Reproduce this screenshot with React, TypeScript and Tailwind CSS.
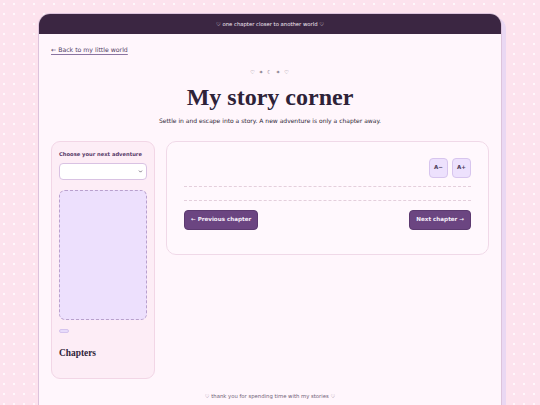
import { ChevronDown } from 'lucide-react';

const sans = "font-['DejaVu_Sans',sans-serif]";
const serif = "font-['Liberation_Serif',serif]";

export default function App() {
  return (
    <div className={`min-h-screen bg-[#fde3ee] bg-[radial-gradient(circle,rgba(255,255,255,0.75)_0.9px,transparent_1.2px)] bg-[size:10px_10px] bg-[position:-1px_-1px] px-[38px] pt-[13px] text-[6px] leading-[8px] ${sans}`}>
      <div className="bg-[#fff6fc] border border-[#dcc3dc] rounded-t-[12px] shadow-[4px_4px_0_#ead8f3] overflow-hidden">
        <div className="h-[20px] bg-[#3b2642] flex items-center justify-center text-[5.3px] text-[#f4eaf6]">
          ♡ one chapter closer to another world ♡
        </div>

        <div className="px-[12px] pt-[12px] pb-[14px]">
          <div className="h-[8px]">
            <a href="#" className="text-[6.2px] text-[#4f3d64] underline decoration-[#8a74a0] underline-offset-2">
              ← Back to my little world
            </a>
          </div>

          <div className="mt-[14px] text-center text-[5.5px] text-[#7c7282] tracking-[1px]">♡ ✦ ☾ ✦ ♡</div>
          <h1 className={`${serif} mt-[8px] text-center text-[24px] leading-[26px] font-bold text-[#2e2238]`}>My story corner</h1>
          <p className="mt-[7px] text-center text-[6px] text-[#2f2836]">
            Settle in and escape into a story. A new adventure is only a chapter away.
          </p>

          <div className="mt-[16px] flex gap-[11px] items-start">
            <aside className="w-[104px] shrink-0 bg-[#fdedf6] border border-[#f2d6e6] rounded-[9px] px-[7px] pt-[8px] pb-[20px]">
              <div className="text-[5.2px] font-semibold text-[#553866]">Choose your next adventure</div>
              <div className="mt-[5px] h-[17px] bg-white border border-[#d9c2e3] rounded-[4px] flex items-center justify-end pr-[3px]">
                <ChevronDown className="w-[5px] h-[5px] text-[#3a3042]" strokeWidth={3} />
              </div>
              <div className="mt-[10px] h-[130px] bg-[#ede0fd] border border-dashed border-[#b9a0cd] rounded-[6px]" />
              <div className="mt-[9px] w-[10px] h-[4px] bg-[#e8dcfb] border border-[#d5c4ee] rounded-full" />
              <h2 className={`${serif} mt-[15px] text-[9.4px] leading-[10px] font-bold text-[#2e2238]`}>Chapters</h2>
            </aside>

            <section className="flex-1 bg-[#fff8fd] border border-[#f0d9e8] rounded-[10px] px-[17px] pt-[16px] pb-[24px]">
              <div className="flex justify-end gap-[4px]">
                <button className="w-[19px] h-[20px] bg-[#ede1fd] border border-[#d7c5ee] rounded-[4px] text-[5.5px] leading-none font-semibold text-[#4a3a58]">A−</button>
                <button className="w-[19px] h-[20px] bg-[#ede1fd] border border-[#d7c5ee] rounded-[4px] text-[5.5px] leading-none font-semibold text-[#4a3a58]">A+</button>
              </div>
              <div className="mt-[8px] border-t border-dashed border-[#e4cfdc]" />
              <div className="mt-[13px] border-t border-dashed border-[#e4cfdc]" />
              <div className="mt-[9px] flex justify-between">
                <button className="h-[20px] px-[6px] bg-[#6b4581] border border-[#5c3a70] rounded-[4px] text-[5.6px] leading-none font-bold text-[#f6eefa]">← Previous chapter</button>
                <button className="h-[20px] px-[6px] bg-[#6b4581] border border-[#5c3a70] rounded-[4px] text-[5.6px] leading-none font-bold text-[#f6eefa]">Next chapter →</button>
              </div>
            </section>
          </div>

          <div className="mt-[13px] text-center text-[5.3px] text-[#6f6076]">♡ thank you for spending time with my stories ♡</div>
        </div>
      </div>
    </div>
  );
}
